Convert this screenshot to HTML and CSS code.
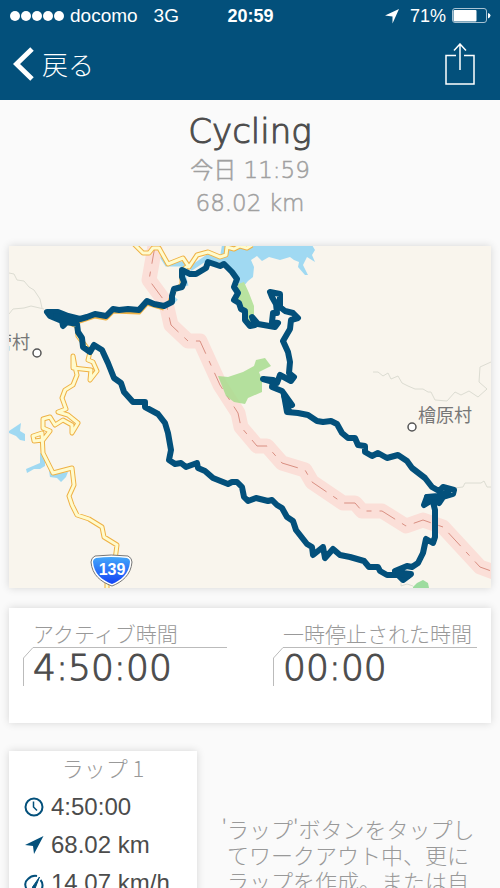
FILE: index.html
```
<!DOCTYPE html>
<html lang="ja">
<head>
    <title>Cycling</title>
    <meta charset="UTF-8">
    <meta name="viewport" content="width=device-width, initial-scale=1.0">
    <link rel="stylesheet" href="styles.css">
</head>
<body>
    <header class="top-bar">
        <div class="status-bar">
            <div class="status-left">
                <span class="signal"><i></i><i></i><i></i><i></i><i></i></span>
                <span class="carrier">docomo</span>
                <span class="network">3G</span>
            </div>
            <div class="clock">20:59</div>
            <div class="status-right">
                <svg width="15" height="15" viewBox="0 0 15 15" fill="#fff"><path d="M14 0L7.5 14.5V7.5L0 6.500Z"/></svg>
                <span>71%</span>
                <svg width="39" height="16" viewBox="0 0 39 16">
                    <rect x="0.500" y="0.500" width="34" height="14" rx="2.500" fill="none" stroke="#a9c3d3"/>
                    <rect x="1.500" y="2" width="23" height="11.500" rx="1" fill="#fff"/>
                    <path d="M36 5Q38.500 5.500 38.500 7.500T36 10.500Z" fill="#fff"/>
                </svg>
            </div>
        </div>
        <nav class="nav-bar">
            <button class="back-button" type="button">
                <svg width="21" height="34" viewBox="0 0 21 34" fill="none" stroke="#fff" stroke-width="5"><path d="M19 2L3.500 17L19 32"/></svg>
                戻る
            </button>
            <button class="share-button" type="button" aria-label="Share">
                <svg width="30" height="42" viewBox="0 0 30 42" fill="none" stroke="#fff" stroke-width="1.500"><path d="M11 12.500H1V41H29V12.500H19M15 27V1M9 7.500L15 1L21 7.500"/></svg>
            </button>
        </nav>
    </header>

    <main>
        <section class="summary">
            <h1>Cycling</h1>
            <p>今日 11:59</p>
            <p>68.02 km</p>
        </section>

        <section class="card map-card">
            <svg class="map" viewBox="9 246 482 342">
                <rect x="9" y="246" width="482" height="342" fill="#f9f5ed"/>

                <!-- water -->
                <g fill="#a0d9f2">
                    <path d="M222 245L220 257L208 262L224 262L234 275L239 283L243 287L248 281L253 277L254 267L251 260L257 256L262 261L269 257L280 260L290 257L294 260L299 262L298 267L305 275L308 275L303 265L307 257L315 262L312 255L315 250L312 245Z"/>
                    <path d="M9 431L15 427L21 423L20 431L25 434V441L20 440L16 436L9 433Z"/>
                    <path d="M40 453L45 454L45 466L40 469L34 469L27 473L26 469L33 466L40 463Z"/>
                    <path d="M48 464L53 474L68 472L66 477L61 482L57 478L50 477Z"/>
                </g>
                <path d="M158 250L167 264L183 264L184 271M190 269L208 257L224 260M182 270L186 286M172 302L176 298" fill="none" stroke="#a0d9f2" stroke-width="5"/>

                <!-- parks -->
                <path d="M238 284L244 282L249 293L254 306L254 318L248 324L242 309L238 300Z" fill="#b9e3a0"/>
                <path d="M413 587L417 583L423 580L428 583L429 588H413Z" fill="#9ddc9f"/>

                <!-- prefecture border -->
                <path class="border-band" d="M155 246L149 280L166 303L171 325L188 341H200L220 385L238 413L241 427L257 446H267L282 463L305 470L312 482L343 503H355L362 511H382L406 526L423 520L443 527L480 567L494 572"/>
                <path class="border-line" d="M155 246L149 280L166 303L171 325L188 341H200L220 385L238 413L241 427L257 446H267L282 463L305 470L312 482L343 503H355L362 511H382L406 526L423 520L443 527L480 567L494 572"/>
                <path d="M218 376L228 377L243 372L254 366L256 360L265 358L271 366L259 372L262 380L262 392L248 398L245 404L234 402L226 396Z" fill="#a8dc8e" fill-opacity=".85"/>

                <!-- village borders -->
                <path class="village-line" d="M9 273L14 274L17 280L24 281L29 287L34 290L40 299L42 308M9 314L13 309L24 308L31 306L44 309M373 372H378L383 376L388 373L391 379L398 376L402 383L408 386L415 389L423 389L428 392H431L435 400L447 401L455 392L461 395L469 391L478 397L487 389L479 382L480 367L491 362M454 488L463 487L465 483H481L484 481L487 487H491M401 580V586L407 584L413 586"/>

                <!-- roads -->
                <g>
                    <path class="road-edge" d="M134 244L143 253H149L153 248H159L168 264L183 258L189 267L197 255L208 252L220 257L226 255L227 247L234 249L240 246L247 248L252 245M188 266L182 270V285L174 290L170 302M47 312L67 322L77 326L78 336L90 352L88 360L93 362L97 371L90 380L91 370L73 368V356L75 367L77 375L73 385L65 390L62 398L66 409L58 412L68 415L78 423L72 433V425L63 420L55 425L50 417L43 419V428L50 431L43 440L34 441L33 436L42 433L43 453L53 473L72 468L74 485L69 496L72 505L77 515L89 519L102 527L104 537L117 545L115 560M107 580V590"/>
                    <path class="road" d="M134 244L143 253H149L153 248H159L168 264L183 258L189 267L197 255L208 252L220 257L226 255L227 247L234 249L240 246L247 248L252 245M188 266L182 270V285L174 290L170 302M47 312L67 322L77 326L78 336L90 352L88 360L93 362L97 371L90 380L91 370L73 368V356L75 367L77 375L73 385L65 390L62 398L66 409L58 412L68 415L78 423L72 433V425L63 420L55 425L50 417L43 419V428L50 431L43 440L34 441L33 436L42 433L43 453L53 473L72 468L74 485L69 496L72 505L77 515L89 519L102 527L104 537L117 545L115 560M107 580V590"/>
                    <path class="road-edge" d="M48 313L80 321L95 316L106 318L113 311L139 312L147 303L164 308"/>
                </g>

                <!-- ride -->
                <path class="route" d="M47 312L58 312L68 316L80 319L87 317L95 314L106 316L113 309L119 310L128 309L139 310L147 301L154 304L164 306L172 302L172 296L174 289L182 287L184 282L182 277L182 270L190 274L196 274L206 268L208 262L220 266L224 264L232 272L237 279L234 287L238 293L234 300L239 303L241 309L245 311L245 320L250 326L255 325L252 317L258 324L275 327L278 323L272 322L273 313L277 313L276 304L272 297L270 292L280 294L280 307L285 311L293 313L298 318L291 320L290 329L283 341L288 352L290 362L289 373L294 377L291 381L280 375L277 383L263 379L273 380L272 387L282 391L292 405L284 395L287 412L298 413L308 415L317 421L323 422L331 421L337 424L342 433L348 438L355 438L358 445L365 446L365 452L372 456L378 453L387 458L398 455L407 461L412 468L425 478L432 487L439 491L443 487L454 490L453 494L443 497L439 503L437 497L424 505L427 497L432 498L435 510L435 537L433 543L426 539L423 553L418 563L412 567L407 566L395 571L402 573L411 574L403 580L398 575L387 575L380 571L378 567L369 567L364 561L350 557L340 555L333 549L325 558L323 547L313 555L312 547L307 544L296 530L293 521L287 517L282 508L277 505L272 500L268 501L256 498L248 501L244 497L242 487L237 482L232 482L228 484L213 478L205 471L198 468L197 463L186 467L181 463L175 464L169 460L171 450L168 433L165 423L158 414L145 407L145 402L133 402L124 392L121 383L114 378L108 363L102 350L94 345L90 352L83 347L82 338L78 332L77 324L67 322L63 326L62 321L50 316Z"/>
                <path class="route" d="M284 395L289 411M427 497L438 496L448 492M398 573L408 576M56 316L74 321"/>

                <!-- places -->
                <circle cx="37" cy="353" r="4" fill="#fff" stroke="#555" stroke-width="1.500"/>
                <circle cx="412" cy="427" r="4" fill="#fff" stroke="#555" stroke-width="1.500"/>
                <text class="place" x="-6" y="349">菅村</text>
                <text class="place" x="418" y="422">檜原村</text>

                <!-- route 139 shield -->
                <defs>
                    <linearGradient id="shield" x1="0" y1="0" x2="0" y2="1">
                        <stop offset="0" stop-color="#43a6fa"/>
                        <stop offset="1" stop-color="#1343f5"/>
                    </linearGradient>
                </defs>
                <path d="M95 556Q111 554 128 556Q132 558 132 562C131 575 122 582 112 586C101 582 92 575 91 562Q91 558 95 556Z" fill="#fff" stroke="#777"/>
                <path d="M96 558Q111 556 127 558Q130 559 130 562C129 574 121 580 112 584C102 580 94 574 93 562Q93 559 96 558Z" fill="url(#shield)"/>
                <text class="shield-number" x="112" y="575">139</text>
            </svg>
        </section>

        <section class="card totals">
            <div class="total">
                <h2>アクティブ時間</h2>
                <div class="total-value">
                    <svg viewBox="0 0 10 39" width="10" height="39"><path d="M.5 39V11L10 .5"/></svg>
                    <span>4:50:00</span>
                </div>
            </div>
            <div class="total">
                <h2>一時停止された時間</h2>
                <div class="total-value">
                    <svg viewBox="0 0 10 39" width="10" height="39"><path d="M.5 39V11L10 .5"/></svg>
                    <span>00:00</span>
                </div>
            </div>
        </section>

        <section class="laps">
            <div class="card lap">
                <h2>ラップ 1</h2>
                <ul>
                    <li>
                        <svg width="20" height="20" viewBox="0 0 20 20" fill="none" stroke="#03507b" stroke-width="2"><circle cx="10" cy="10" r="8.500"/><path d="M9.500 4.500V10L13 13.500" stroke-width="1.500"/></svg>
                        4:50:00
                    </li>
                    <li>
                        <svg width="20" height="20" viewBox="0 0 20 20" fill="#03507b"><path d="M19.500 1L10 19L9 11L1 10Z"/></svg>
                        68.02 km
                    </li>
                    <li>
                        <svg width="20" height="20" viewBox="0 0 20 20" fill="none" stroke="#03507b" stroke-width="2"><path d="M3 17Q-1 10 4 6Q8 2 13 3M16.500 7Q20 11 17.500 17"/><path d="M15.500 4L8.500 14Q8 18 11 15.500Z" fill="#03507b" stroke-width="1"/></svg>
                        14.07 km/h
                    </li>
                </ul>
            </div>
            <p class="lap-hint">'ラップ'ボタンをタップしてワークアウト中、更にラップを作成。または自</p>
        </section>
    </main>
</body>
</html>
```
FILE: styles.css
```
* {
    margin: 0;
    padding: 0;
    box-sizing: border-box;
}

body {
    font-family: 'DejaVu Sans', 'Noto Sans CJK JP', sans-serif;
    font-weight: 200;
    background: #fafafa;
    color: #4c4c4c;
}

svg {
    display: block;
    flex-shrink: 0;
}

button {
    background: none;
    border: none;
    color: inherit;
    cursor: pointer;
}

/* Header */
.top-bar {
    background: #03507b;
    color: #fff;
}

.status-bar {
    display: grid;
    grid-template-columns: 1fr auto 1fr;
    align-items: center;
    height: 32px;
    padding: 0 9px 0 10px;
    font-family: 'Liberation Sans', Arial, sans-serif;
    font-size: 18px;
    font-weight: 400;
}

.status-left,
.status-right {
    display: flex;
    align-items: center;
    gap: 6px;
}

.status-left {
    font-size: 19px;
}

.status-right {
    justify-content: flex-end;
}

.status-right span {
    margin-left: 4px;
}

.signal {
    display: flex;
    gap: 1px;
}

.signal i {
    width: 10px;
    height: 10px;
    border-radius: 50%;
    background: #fff;
}

.network {
    margin-left: 10px;
}

.clock {
    font-weight: 700;
}

.nav-bar {
    display: flex;
    align-items: center;
    justify-content: space-between;
    height: 68px;
    padding: 0 25px 4px 13px;
}

.back-button {
    display: flex;
    align-items: center;
    gap: 8px;
    font-family: 'Noto Sans CJK JP', sans-serif;
    font-size: 26px;
    font-weight: 300;
    line-height: 34px;
}

/* Workout summary */
.summary {
    padding: 8px 10px 26px;
    text-align: center;
    color: #a0a0a0;
    font-size: 23px;
    line-height: 33px;
    -webkit-text-stroke: 0.5px;
}

.summary h1 {
    color: #4c4c4c;
    font-size: 34px;
    font-weight: 200;
    line-height: 46px;
    -webkit-text-stroke: 1px;
}

.card {
    background: #fff;
    box-shadow: 0 0 8px rgba(0, 0, 0, 0.15);
}

/* Map */
.map-card {
    margin: 0 9px 20px;
}

.map {
    width: 100%;
    height: auto;
}

.border-band,
.border-line,
.village-line,
.road,
.road-edge,
.route {
    fill: none;
    stroke-linejoin: round;
}

.border-band {
    stroke: #fbdfd8;
    stroke-width: 15;
}

.border-line {
    stroke: #d98f82;
    stroke-width: 1;
    stroke-dasharray: 18 8 5 8;
}

.village-line {
    stroke: #dcdcd2;
    stroke-width: 1;
}

.road-edge {
    stroke: #efb144;
    stroke-width: 5;
}

.road {
    stroke: #fffbcd;
    stroke-width: 3;
}

.route {
    stroke: #03507b;
    stroke-width: 6;
    stroke-linecap: round;
}

.place {
    font-family: 'Noto Sans CJK JP', sans-serif;
    font-size: 18px;
    font-weight: 400;
    fill: #777;
}

.shield-number {
    font-family: 'Liberation Sans', Arial, sans-serif;
    font-size: 16px;
    font-weight: 700;
    fill: #fff;
    text-anchor: middle;
}

/* Totals */
.totals {
    display: grid;
    grid-template-columns: 1fr 1fr;
    gap: 46px;
    margin: 0 9px 28px;
    padding: 11px 14px 36px;
}

.total h2 {
    padding-left: 10px;
    color: #999;
    font-family: 'Noto Sans CJK JP', sans-serif;
    font-size: 21px;
    font-weight: 300;
    line-height: 28px;
    white-space: nowrap;
}

.total-value {
    display: flex;
}

.total-value svg {
    fill: none;
    stroke: #bbb;
}

.total-value span {
    flex: 1;
    border-top: 1px solid #bbb;
    font-size: 36px;
    line-height: 39px;
    white-space: nowrap;
    -webkit-text-stroke: 1px;
}

/* Laps */
.laps {
    display: flex;
    align-items: flex-start;
    padding: 0 9px;
}

.lap {
    width: 39%;
    padding-bottom: 16px;
}

.lap h2 {
    color: #999;
    font-family: 'Noto Sans CJK JP', sans-serif;
    font-size: 22px;
    font-weight: 300;
    line-height: 32px;
    text-align: center;
}

.lap ul {
    list-style: none;
    padding: 5px 0 0 15px;
}

.lap li {
    display: flex;
    align-items: center;
    gap: 7px;
    height: 38px;
    font-family: 'Liberation Sans', Arial, sans-serif;
    font-size: 24px;
    font-weight: 400;
    white-space: nowrap;
}

.lap-hint {
    flex: 1;
    padding: 64px 12px 0 20px;
    color: #999;
    font-family: 'Noto Sans CJK JP', sans-serif;
    font-size: 22px;
    font-weight: 300;
    line-height: 26px;
    text-align: center;
}
```
